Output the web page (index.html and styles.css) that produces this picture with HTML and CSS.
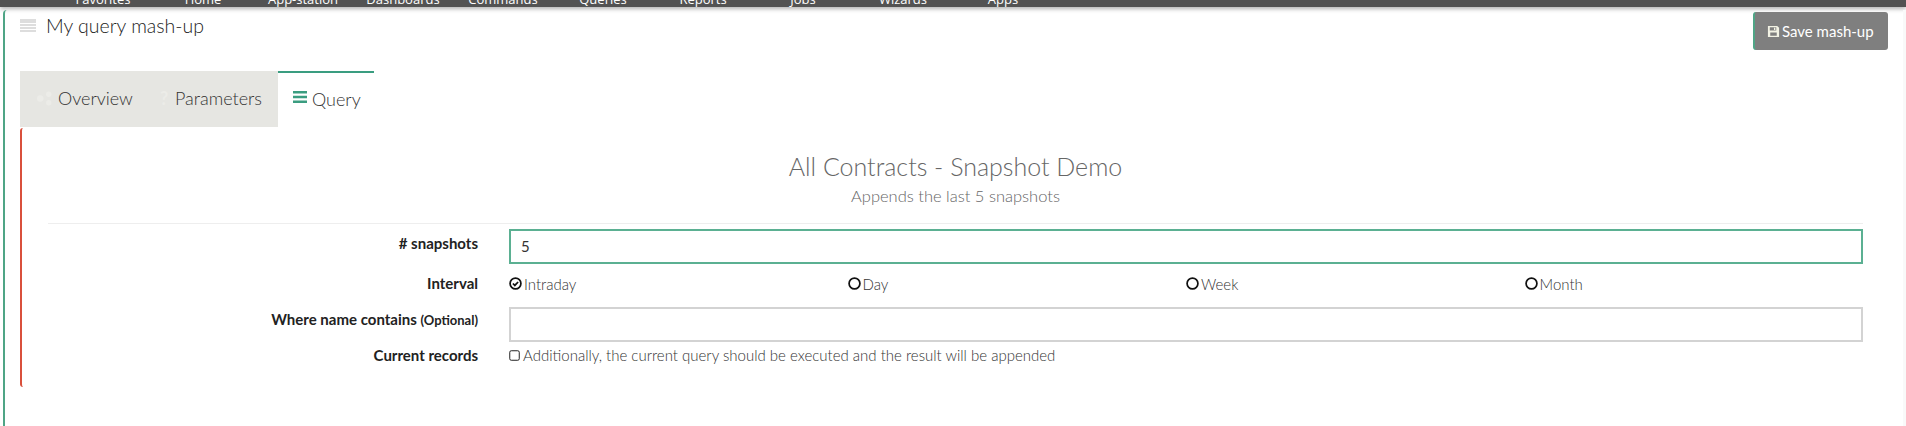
FILE: index.html
```html
<!DOCTYPE html>
<html lang="en">
<head>
  <meta charset="UTF-8">
  <title>My query mash-up</title>
  <link rel="stylesheet" href="styles.css">
</head>
<body>
  <nav class="topbar">
    <a class="nav-item">Favorites</a>
    <a class="nav-item">Home</a>
    <a class="nav-item">App-station</a>
    <a class="nav-item">Dashboards</a>
    <a class="nav-item">Commands</a>
    <a class="nav-item">Queries</a>
    <a class="nav-item">Reports</a>
    <a class="nav-item">Jobs</a>
    <a class="nav-item">Wizards</a>
    <a class="nav-item">Apps</a>
  </nav>

  <main class="panel">
    <header class="panel-head">
      <h2 class="panel-title">
        <svg class="title-icon" viewBox="0 0 16 13"><path d="M0 0h16v4H0zM0 5h16v2H0zM0 8h16v2H0zM0 11h16v2H0z"/></svg>
        My query mash-up
      </h2>
      <button class="save-btn">
        <svg class="save-icon" viewBox="0 0 14 14"><path d="M1 1h10l2 2v10H1zM3 2.500v3.500h7V2.500zM7.500 3h1.500v2.500H7.500zM3.500 8v3.500h7V8z" fill-rule="evenodd"/></svg>
        Save mash-up
      </button>
    </header>

    <div class="tabs">
      <a class="tab tab-overview">
        <svg class="tab-icon" viewBox="0 0 16 16"><circle cx="4" cy="8" r="3"/><circle cx="12" cy="4" r="2.500"/><circle cx="12" cy="12" r="2.500"/></svg>
        Overview
      </a>
      <a class="tab tab-params"><span class="tab-mark">?</span>Parameters</a>
      <a class="tab tab-active">
        <svg class="bars-icon" viewBox="0 0 14 12"><path d="M0 0h14v2.600H0zM0 4.700h14v2.600H0zM0 9.400h14V12H0z"/></svg>
        Query
      </a>
    </div>

    <section class="tab-body">
      <div class="query-head">
        <h3 class="query-title">All Contracts - Snapshot Demo</h3>
        <p class="query-sub">Appends the last 5 snapshots</p>
      </div>

      <form class="query-form">
        <label class="field-label label-snap"># snapshots</label>
        <input class="field-input input-active" type="text" value="5">

        <label class="field-label label-interval">Interval</label>
        <div class="radios">
          <span class="radio">
            <svg class="radio-icon" viewBox="0 0 12 12"><circle cx="6" cy="6" r="5"/><path d="M3.600 6l1.800 1.800 3-3.200"/></svg>
            Intraday
          </span>
          <span class="radio"><svg class="radio-icon" viewBox="0 0 12 12"><circle cx="6" cy="6" r="5"/></svg>Day</span>
          <span class="radio"><svg class="radio-icon" viewBox="0 0 12 12"><circle cx="6" cy="6" r="5"/></svg>Week</span>
          <span class="radio"><svg class="radio-icon" viewBox="0 0 12 12"><circle cx="6" cy="6" r="5"/></svg>Month</span>
        </div>

        <label class="field-label label-where">Where name contains <small>(Optional)</small></label>
        <input class="field-input" type="text">

        <label class="field-label label-current">Current records</label>
        <div class="check">
          <svg class="check-icon" viewBox="0 0 11 11"><rect x="0.750" y="0.750" width="9.500" height="9.500" rx="1.500"/></svg>
          Additionally, the current query should be executed and the result will be appended
        </div>
      </form>
    </section>
  </main>
</body>
</html>
```

FILE: styles.css
```css
html, body {
  margin: 0;
  padding: 0;
}

body {
  height: 426px;
  overflow: hidden;
  background: #fff;
  color: #333;
  font-family: "Lato", "Open Sans", sans-serif;
  font-weight: 300;
  font-size: 15px;
}

/* Top navigation, cut off by the top of the window */
.topbar {
  display: flex;
  height: 7px;
  padding-left: 53px;
  background: #535353;
  box-shadow: 0 2px 4px rgba(0, 0, 0, 0.3);
  overflow: hidden;
  color: #fff;
  font-family: "Open Sans", sans-serif;
  font-weight: 400;
  font-size: 13px;
  line-height: 14px;
}

.nav-item {
  flex: none;
  width: 100px;
  margin-top: -8px;
  text-align: center;
  white-space: nowrap;
}

.panel {
  box-sizing: border-box;
  height: 416px;
  margin: 3px 0 0 3px;
  padding: 2px 15px 0 15px;
  border-left: 2px solid #4fa586;
  border-right: 3px solid #f9f9f9;
  border-top-left-radius: 4px;
}

.panel-head {
  display: flex;
  justify-content: space-between;
  align-items: flex-start;
  height: 59px;
}

.panel-title {
  display: flex;
  align-items: center;
  gap: 10px;
  margin: 0;
  height: 26px;
  font-size: 19.500px;
  font-weight: 300;
  color: #222;
}

.title-icon {
  width: 16px;
  height: 13px;
  fill: #ddd;
}

.save-btn {
  display: flex;
  align-items: center;
  gap: 2px;
  box-sizing: border-box;
  width: 135px;
  height: 38px;
  padding: 0 0 0 12px;
  background: #7f7f7f;
  border: 0;
  border-left: 2px solid #4fa586;
  border-radius: 3px;
  color: #fff;
  font-family: inherit;
  font-weight: 400;
  font-size: 15px;
}

.save-icon {
  width: 13px;
  height: 13px;
  fill: #f2f2e4;
}

.tabs {
  display: flex;
  height: 56px;
}

.tab {
  display: flex;
  align-items: center;
  box-sizing: border-box;
  padding-bottom: 2px;
  background: #e6e6e2;
  font-size: 18px;
  color: #333;
}

.tab-overview {
  width: 127px;
  padding-left: 16px;
}

.tab-icon {
  width: 17px;
  height: 17px;
  margin-right: 5px;
  fill: #ececE8;
}

.tab-params {
  width: 131px;
  padding-left: 13px;
}

.tab-mark {
  width: 15px;
  color: #ececE8;
  font-weight: 700;
}

.tab-active {
  width: 96px;
  padding-left: 15px;
  background: #fff;
  border-top: 2px solid #3a9d80;
}

.bars-icon {
  width: 14px;
  height: 12px;
  margin-right: 5px;
  margin-top: -4px;
  fill: #3a9d80;
}

.tab-body {
  height: 259px;
  margin: 1px 25px 0 0;
  border-left: 2px solid #d9503c;
  border-radius: 3px 0 0 3px;
}

.query-head {
  box-sizing: border-box;
  height: 96px;
  margin-left: 26px;
  padding-top: 24px;
  border-bottom: 1px solid #eee;
  text-align: center;
  color: #666;
}

.query-title {
  margin: 0;
  font-size: 25px;
  font-weight: 300;
  line-height: 28px;
}

.query-sub {
  margin: 6px 0 0;
  font-size: 16.500px;
  line-height: 20px;
}

.query-form {
  display: grid;
  grid-template-columns: 456px 1fr;
  column-gap: 31px;
  margin-top: 5px;
}

.field-label {
  text-align: right;
  font-weight: 700;
  font-size: 15px;
  color: #222;
  line-height: 18px;
}

.field-label small {
  font-size: 13px;
}

.label-snap { padding-top: 5px; }
.label-interval { padding-top: 10px; }
.label-where { padding-top: 3px; }
.label-current { padding-top: 4px; }

.field-input {
  box-sizing: border-box;
  height: 35px;
  padding: 0 10px 2px;
  border: 2px solid #d3d3d3;
  background: #fff;
  font-family: "Lato", sans-serif;
  font-size: 15px;
  color: #333;
  outline: none;
}

.input-active {
  border-color: #5bb092;
}

.radios {
  display: grid;
  grid-template-columns: repeat(4, 1fr);
  box-sizing: border-box;
  height: 43px;
  padding-bottom: 4px;
  align-items: center;
}

.radio, .check {
  display: flex;
  align-items: center;
  font-size: 15px;
  color: #333;
}

.radio-icon {
  width: 13px;
  height: 13px;
  margin-right: 2px;
  fill: none;
  stroke: #111;
  stroke-width: 1.600;
}

.check {
  height: 26px;
}

.check-icon {
  width: 11px;
  height: 11px;
  margin-right: 3px;
  fill: none;
  stroke: #222;
  stroke-width: 1;
}
```
